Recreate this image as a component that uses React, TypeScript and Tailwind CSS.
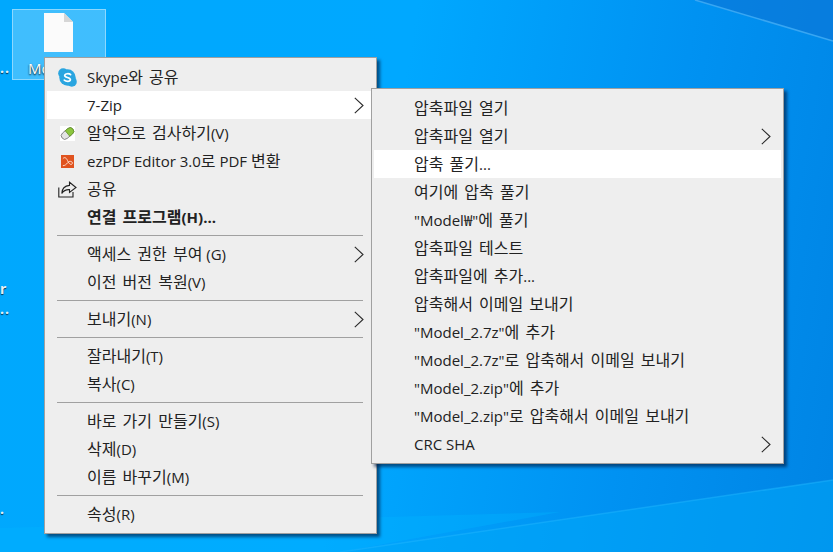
const font = "font-['Open_Sans','Noto_Sans_CJK_KR',sans-serif]";

function Chevron() {
  return (
    <svg width="10" height="17" viewBox="0 0 10 17" fill="none" className="shrink-0">
      <path d="M0.8 0.8 L9 8.5 L0.8 16.2" stroke="#2a2a2a" strokeWidth="1.1" />
    </svg>
  );
}

function SkypeIcon() {
  return (
    <svg width="19" height="19" viewBox="0 0 19 19">
      <circle cx="5.2" cy="5.2" r="5" fill="#2aa5e0" />
      <circle cx="13.8" cy="13.8" r="5" fill="#2aa5e0" />
      <circle cx="9.5" cy="9.5" r="8.2" fill="#2aa5e0" />
      <path d="M12.6 6.6C11.6 5.6 7 5 6.7 7.4 6.4 9.9 12.6 9 12.4 11.8 12.2 14 7.8 13.6 6.3 12.2" fill="none" stroke="#fff" strokeWidth="1.7" strokeLinecap="round" />
    </svg>
  );
}

function PillIcon() {
  return (
    <svg width="15" height="15" viewBox="0 0 16 16">
      <rect x="0" y="0" width="16" height="16" fill="#fff" />
      <g transform="rotate(-40 8 8)">
        <rect x="0.5" y="4.2" width="15" height="7.6" rx="3.8" fill="#e4e4e4" stroke="#6f6f6f" strokeWidth="0.8" />
        <path d="M8 4.2h3.7a3.8 3.8 0 0 1 0 7.6H8z" fill="#8cc63f" stroke="#5c8a22" strokeWidth="0.7" />
      </g>
    </svg>
  );
}

function PdfIcon() {
  return (
    <svg width="13" height="13" viewBox="0 0 14 14">
      <rect width="14" height="14" fill="#e0531f" />
      <path d="M2 4C4 1.5 6 3.5 7 6S10.5 11.5 12 9.5 9.5 5.5 7.5 8 4 11.5 2 11.5" fill="none" stroke="#ffe4d6" strokeWidth="1" />
    </svg>
  );
}

function ShareIcon() {
  return (
    <svg width="19" height="17" viewBox="0 0 19 17" fill="none" stroke="#222" strokeWidth="1.1">
      <path d="M0.8 6.5V16H15V11" />
      <path d="M11.5 1.2L18 6.5 11.5 11.5V8.6C8 8.4 5.5 9.6 3.8 12.5 4 8 6.5 4.8 11.5 4.4z" />
    </svg>
  );
}

type Row = { label?: string; icon?: React.ReactNode; arrow?: boolean; bold?: boolean; hot?: boolean; sep?: boolean };

const mainRows: Row[] = [
  { label: "Skype와 공유", icon: <SkypeIcon /> },
  { label: "7-Zip", arrow: true, hot: true },
  { label: "알약으로 검사하기(V)", icon: <PillIcon /> },
  { label: "ezPDF Editor 3.0로 PDF 변환", icon: <PdfIcon /> },
  { label: "공유", icon: <ShareIcon /> },
  { label: "연결 프로그램(H)...", bold: true },
  { sep: true },
  { label: "액세스 권한 부여 (G)", arrow: true },
  { label: "이전 버전 복원(V)" },
  { sep: true },
  { label: "보내기(N)", arrow: true },
  { sep: true },
  { label: "잘라내기(T)" },
  { label: "복사(C)" },
  { sep: true },
  { label: "바로 가기 만들기(S)" },
  { label: "삭제(D)" },
  { label: "이름 바꾸기(M)" },
  { sep: true },
  { label: "속성(R)" },
];

const subRows: Row[] = [
  { label: "압축파일 열기" },
  { label: "압축파일 열기", arrow: true },
  { label: "압축 풀기...", hot: true },
  { label: "여기에 압축 풀기" },
  { label: '"Model₩"에 풀기' },
  { label: "압축파일 테스트" },
  { label: "압축파일에 추가..." },
  { label: "압축해서 이메일 보내기" },
  { label: '"Model_2.7z"에 추가' },
  { label: '"Model_2.7z"로 압축해서 이메일 보내기' },
  { label: '"Model_2.zip"에 추가' },
  { label: '"Model_2.zip"로 압축해서 이메일 보내기' },
  { label: "CRC SHA", arrow: true },
];

// hangul runs are set a little larger than latin, like Malgun next to Segoe
function Label({ text }: { text: string }) {
  const parts = text.split(/([\uAC00-\uD7A3]+(?: [\uAC00-\uD7A3]+)*)/);
  return (
    <>
      {parts.map((p, i) =>
        i % 2 === 1 ? (
          <span key={i} className="text-[16px] [word-spacing:2px]">{p}</span>
        ) : (
          <span key={i}>{p}</span>
        ),
      )}
    </>
  );
}

function MenuRows({ rows }: { rows: Row[] }) {
  return (
    <>
      {rows.map((r, i) =>
        r.sep ? (
          <div key={i} className="h-[9px] flex items-center pl-[10px] pr-[11px]">
            <div className="h-px w-full bg-[#a0a0a0]" />
          </div>
        ) : (
          <div key={i} className={`h-7 flex items-center ${r.hot ? "bg-white" : ""}`}>
            <div className="w-10 shrink-0 flex justify-center pl-[1px]">{r.icon}</div>
            <span className={`flex-1 whitespace-nowrap text-[15px] leading-5 text-[#222222] ${r.bold ? "font-bold" : ""}`}>
              <Label text={r.label ?? ""} />
            </span>
            {r.arrow && <div className="pr-[10px] flex"><Chevron /></div>}
          </div>
        ),
      )}
    </>
  );
}

// cut-off names of other desktop icons at the left edge
function EdgeLabel({ text, className }: { text: string; className: string }) {
  return (
    <span className={`absolute left-0 text-[14px] font-bold leading-4 tracking-[1px] text-[#e8eef4] [text-shadow:0_1px_1px_#0a2a44] ${className}`}>{text}</span>
  );
}

export default function App() {
  return (
    <div className={`relative h-[552px] w-[833px] overflow-hidden bg-[linear-gradient(100deg,#00a8fd_0%,#00a8ff_45%,#0092f2_75%,#0084e4_100%)] ${font}`}>
      {/* wallpaper light beams */}
      <svg width="833" height="552" viewBox="0 0 833 552" className="absolute inset-0">
        <path d="M695 0L833 41V0z" fill="#0a78d8" opacity="0.7" />
        <path d="M695 0L833 41" stroke="#38a6f2" strokeWidth="1.5" />
        <path d="M340 552L833 480V552z" fill="#00a8f8" opacity="0.55" />
        <path d="M340 552L833 480" stroke="#22b8ff" strokeWidth="1.5" opacity="0.45" />
        <path d="M0 552V528L560 512 340 552z" fill="#00b4ff" opacity="0.35" />
      </svg>

      <EdgeLabel text=".." className="top-[60px]" />
      <EdgeLabel text="r" className="top-[281px]" />
      <EdgeLabel text=".." className="top-[301px]" />
      <EdgeLabel text="." className="top-[501px]" />

      {/* selected file on the desktop */}
      <div className="absolute left-[12px] top-[9px] h-[71px] w-[94px] border border-white/40 bg-white/25 flex flex-col">
        <svg width="29" height="39" viewBox="0 0 29 39" className="mt-[3px] ml-[31px]">
          <path d="M0 0H20L29 9V39H0z" fill="#fbfbfb" />
          <path d="M20 0L29 9H20z" fill="#d6d6d6" />
        </svg>
        <span className="mt-[6px] ml-[15px] text-[15px] leading-5 text-white [text-shadow:0_1px_2px_#000]">Mo</span>
      </div>

      {/* main context menu */}
      <div className="absolute left-[44px] top-[57px] w-[333px] border border-[#a0a0a0] bg-[#eeeeee] px-[2px] py-[5px] shadow-[3px_3px_3px_rgba(0,30,70,0.65)]">
        <MenuRows rows={mainRows} />
      </div>

      {/* 7-Zip submenu */}
      <div className="absolute left-[371px] top-[88px] w-[413px] border border-[#a0a0a0] bg-[#eeeeee] px-[2px] py-[5px] shadow-[3px_3px_3px_rgba(0,30,70,0.65)]">
        <MenuRows rows={subRows} />
      </div>
    </div>
  );
}
